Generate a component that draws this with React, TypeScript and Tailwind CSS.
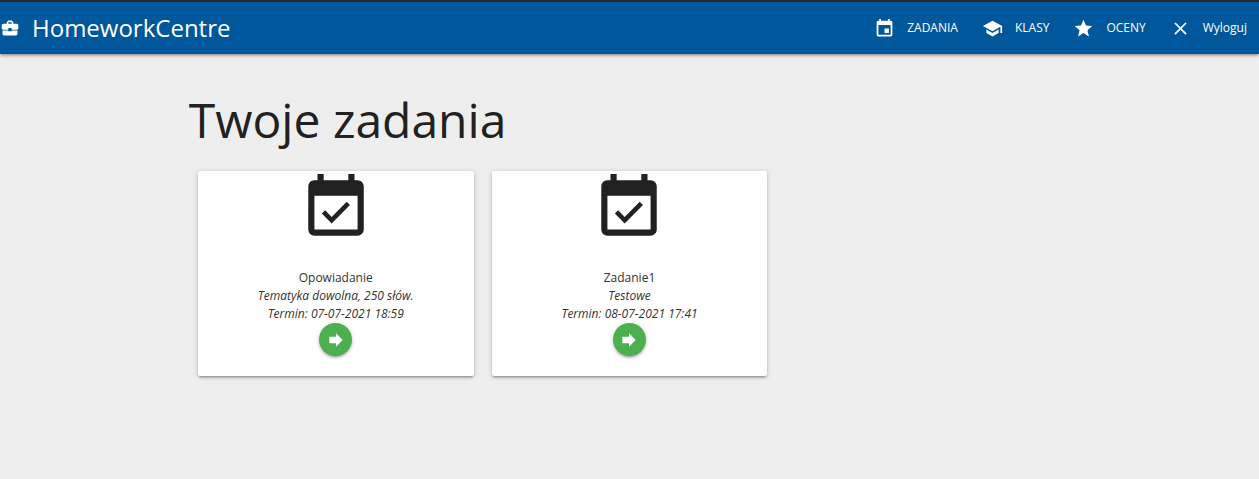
import type { IconType } from "react-icons";
import {
  MdBusinessCenter,
  MdClose,
  MdEvent,
  MdEventAvailable,
  MdForward,
  MdSchool,
  MdStar,
} from "react-icons/md";

type NavItem = { label: string; icon: IconType };
type Task = { title: string; description: string; due: string };

const navItems: NavItem[] = [
  { label: "ZADANIA", icon: MdEvent },
  { label: "KLASY", icon: MdSchool },
  { label: "OCENY", icon: MdStar },
  { label: "Wyloguj", icon: MdClose },
];

const tasks: Task[] = [
  { title: "Opowiadanie", description: "Tematyka dowolna, 250 słów.", due: "07-07-2021 18:59" },
  { title: "Zadanie1", description: "Testowe", due: "08-07-2021 17:41" },
];

function TaskCard({ title, description, due }: Task) {
  return (
    <article className="flex flex-col items-center rounded-xs bg-white pb-5 text-center text-xs leading-[18px] text-[#333333] shadow-[0_2px_2px_0_rgba(0,0,0,0.14),0_3px_1px_-2px_rgba(0,0,0,0.12),0_1px_5px_0_rgba(0,0,0,0.2)]">
      <MdEventAvailable className="mb-6 size-[74px] text-[#212121]" aria-hidden="true" />
      <h2>{title}</h2>
      <p className="italic">{description}</p>
      <p className="italic">Termin: {due}</p>
      <button
        type="button"
        aria-label={`Otwórz: ${title}`}
        className="flex size-[33px] items-center justify-center rounded-full bg-[#4caf50] text-white shadow-[0_2px_2px_0_rgba(0,0,0,0.14),0_3px_1px_-2px_rgba(0,0,0,0.12),0_1px_5px_0_rgba(0,0,0,0.2)]"
      >
        <MdForward className="size-5" />
      </button>
    </article>
  );
}

export default function App() {
  return (
    <div className="min-h-screen bg-[#eeeeee] font-['Open_Sans','Noto_Sans',sans-serif] text-[#212121]">
      <header className="border-t-2 border-[#262a2e] bg-[#01579b] text-white shadow-[0_2px_2px_0_rgba(0,0,0,0.14),0_3px_1px_-2px_rgba(0,0,0,0.12),0_1px_5px_0_rgba(0,0,0,0.2)]">
        <nav className="flex h-[52px] items-center justify-between">
          <a href="#" className="flex items-center gap-3 text-2xl">
            <MdBusinessCenter className="size-5" />
            HomeworkCentre
          </a>
          <ul className="flex items-center text-xs">
            {navItems.map(({ label, icon: Icon }) => (
              <li key={label}>
                <a href="#" className="flex items-center gap-3 px-3">
                  <Icon className="size-[21px]" />
                  {label}
                </a>
              </li>
            ))}
          </ul>
        </nav>
      </header>
      <main className="mx-auto w-[70%] pt-8">
        <h1 className="text-5xl leading-[67px]">Twoje zadania</h1>
        <div className="mt-[18px] grid grid-cols-3">
          {tasks.map((task) => (
            <div key={task.title} className="px-[9px]">
              <TaskCard {...task} />
            </div>
          ))}
        </div>
      </main>
    </div>
  );
}
